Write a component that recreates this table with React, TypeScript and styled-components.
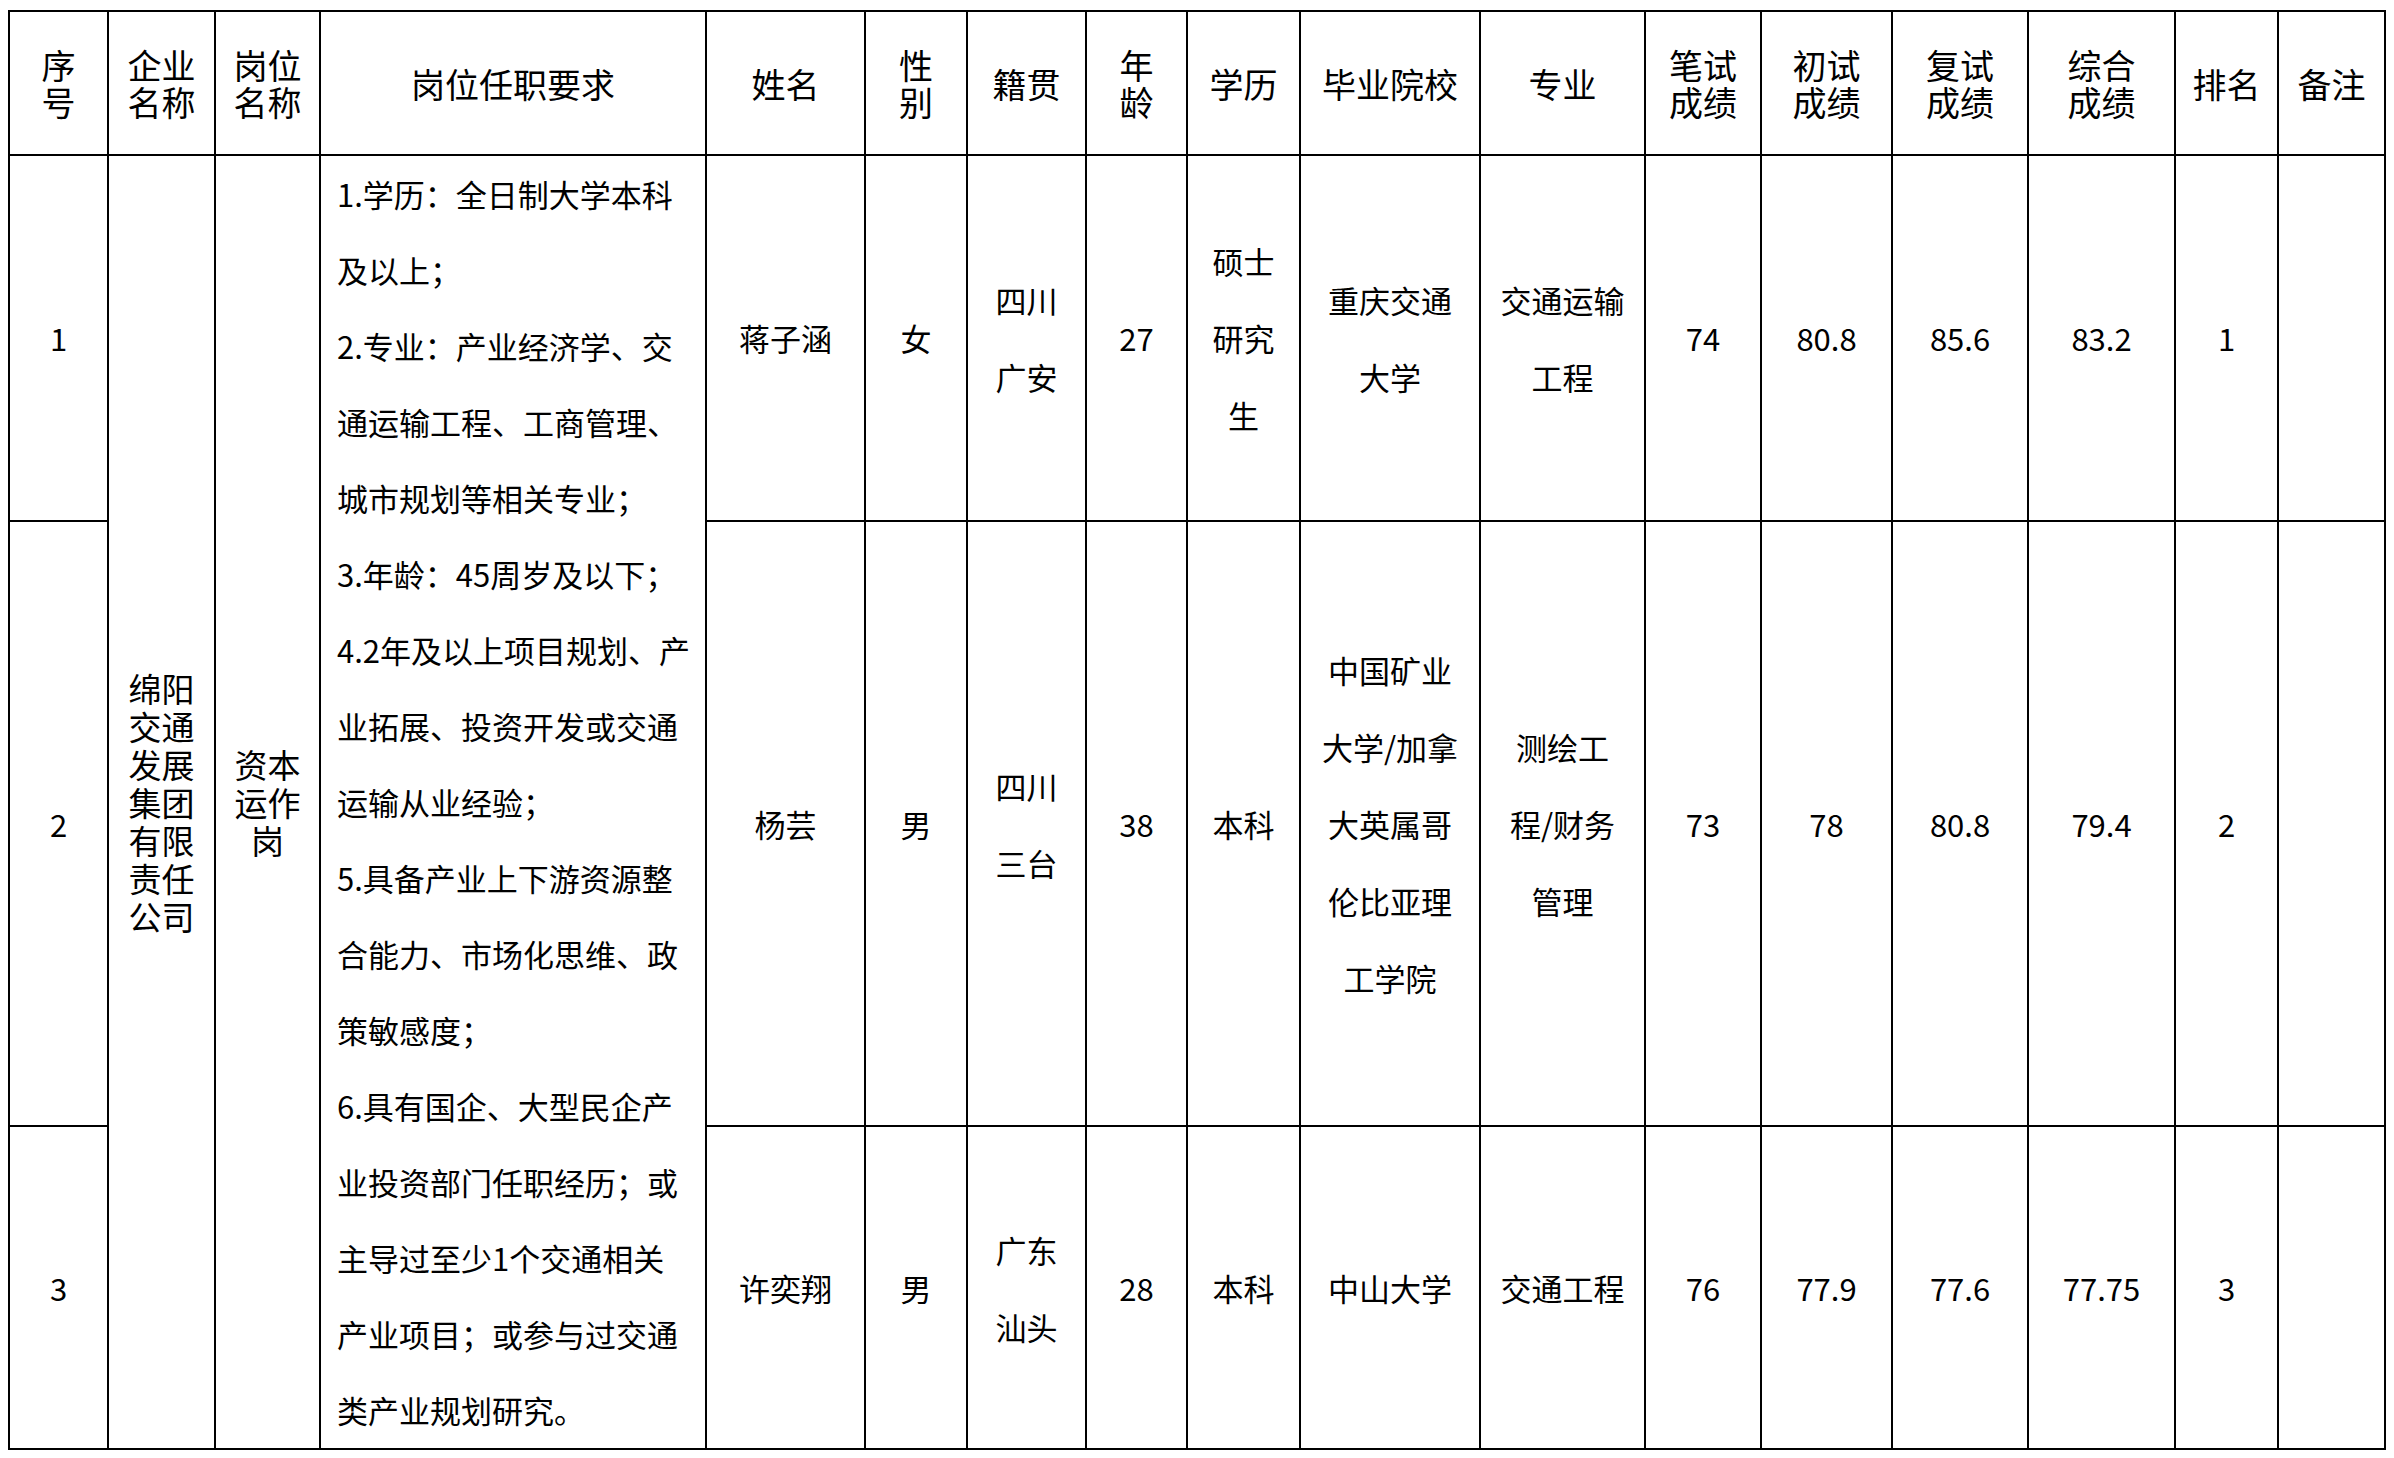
import React from "react";
import styled, { createGlobalStyle } from "styled-components";

const GlobalStyle = createGlobalStyle`
  html, body { margin: 0; padding: 0; background: #ffffff; }
  body {
    padding: 10px 0 0 8px;
    font-family: "Noto Sans CJK SC", "Noto Sans", sans-serif;
    color: #000;
  }
`;

const Sheet = styled.table`
  border-collapse: collapse;
  table-layout: fixed;
  width: 2378px;
  border: 2px solid #000;
`;

const Col = styled.col<{ $w: number }>`
  width: ${(p) => p.$w}px;
`;

const Row = styled.tr<{ $h: number }>`
  height: ${(p) => p.$h}px;
`;

const HeadCell = styled.th`
  border: 2px solid #000;
  padding: 0;
  font-weight: 400;
  font-size: 34px;
  line-height: 37px;
  text-align: center;
  vertical-align: middle;
  white-space: nowrap;
`;

const Cell = styled.td<{ $lh?: number; $fs?: number }>`
  border: 2px solid #000;
  padding: 0;
  font-size: ${(p) => p.$fs ?? 31}px;
  line-height: ${(p) => p.$lh ?? 77}px;
  text-align: center;
  vertical-align: middle;
  white-space: nowrap;
`;

const UnitCell = styled(Cell)`
  font-size: 33px;
  line-height: 38px;
`;

const ReqCell = styled(Cell)`
  text-align: left;
  line-height: 76px;
  padding-left: 16px;
  vertical-align: top;
`;

const Lines: React.FC<{ text: string }> = ({ text }) => {
  const parts = text.split("|");
  return (
    <>
      {parts.map((p, i) => (
        <React.Fragment key={i}>
          {i > 0 && <br />}
          {p}
        </React.Fragment>
      ))}
    </>
  );
};

const widths = [99, 107, 105, 386, 159, 102, 119, 101, 113, 180, 165, 116, 131, 136, 147, 103, 107];

const headers = [
  "序|号",
  "企业|名称",
  "岗位|名称",
  "岗位任职要求",
  "姓名",
  "性|别",
  "籍贯",
  "年|龄",
  "学历",
  "毕业院校",
  "专业",
  "笔试|成绩",
  "初试|成绩",
  "复试|成绩",
  "综合|成绩",
  "排名",
  "备注",
];

const requirements = [
  "1.学历：全日制大学本科",
  "及以上；",
  "2.专业：产业经济学、交",
  "通运输工程、工商管理、",
  "城市规划等相关专业；",
  "3.年龄：45周岁及以下；",
  "4.2年及以上项目规划、产",
  "业拓展、投资开发或交通",
  "运输从业经验；",
  "5.具备产业上下游资源整",
  "合能力、市场化思维、政",
  "策敏感度；",
  "6.具有国企、大型民企产",
  "业投资部门任职经历；或",
  "主导过至少1个交通相关",
  "产业项目；或参与过交通",
  "类产业规划研究。",
];

type Person = {
  no: string;
  name: string;
  sex: string;
  origin: string;
  age: string;
  edu: string;
  school: string;
  major: string;
  written: string;
  first: string;
  second: string;
  total: string;
  rank: string;
  h: number;
};

const people: Person[] = [
  {
    no: "1",
    name: "蒋子涵",
    sex: "女",
    origin: "四川|广安",
    age: "27",
    edu: "硕士|研究|生",
    school: "重庆交通|大学",
    major: "交通运输|工程",
    written: "74",
    first: "80.8",
    second: "85.6",
    total: "83.2",
    rank: "1",
    h: 365,
  },
  {
    no: "2",
    name: "杨芸",
    sex: "男",
    origin: "四川|三台",
    age: "38",
    edu: "本科",
    school: "中国矿业|大学/加拿|大英属哥|伦比亚理|工学院",
    major: "测绘工|程/财务|管理",
    written: "73",
    first: "78",
    second: "80.8",
    total: "79.4",
    rank: "2",
    h: 605,
  },
  {
    no: "3",
    name: "许奕翔",
    sex: "男",
    origin: "广东|汕头",
    age: "28",
    edu: "本科",
    school: "中山大学",
    major: "交通工程",
    written: "76",
    first: "77.9",
    second: "77.6",
    total: "77.75",
    rank: "3",
    h: 322,
  },
];

export default function App() {
  return (
    <>
      <GlobalStyle />
      <Sheet>
        <colgroup>
          {widths.map((w, i) => (
            <Col key={i} $w={w} />
          ))}
        </colgroup>
        <thead>
          <Row $h={144}>
            {headers.map((h, i) => (
              <HeadCell key={i}>
                <Lines text={h} />
              </HeadCell>
            ))}
          </Row>
        </thead>
        <tbody>
          {people.map((p, i) => (
            <Row key={p.no} $h={p.h}>
              <Cell>{p.no}</Cell>
              {i === 0 && (
                <>
                  <UnitCell rowSpan={3}>
                    <Lines text="绵阳|交通|发展|集团|有限|责任|公司" />
                  </UnitCell>
                  <UnitCell rowSpan={3}>
                    <Lines text="资本|运作|岗" />
                  </UnitCell>
                  <ReqCell rowSpan={3}>
                    <Lines text={requirements.join("|")} />
                  </ReqCell>
                </>
              )}
              <Cell>{p.name}</Cell>
              <Cell>{p.sex}</Cell>
              <Cell>
                <Lines text={p.origin} />
              </Cell>
              <Cell>{p.age}</Cell>
              <Cell>
                <Lines text={p.edu} />
              </Cell>
              <Cell>
                <Lines text={p.school} />
              </Cell>
              <Cell>
                <Lines text={p.major} />
              </Cell>
              <Cell>{p.written}</Cell>
              <Cell>{p.first}</Cell>
              <Cell>{p.second}</Cell>
              <Cell>{p.total}</Cell>
              <Cell>{p.rank}</Cell>
              <Cell></Cell>
            </Row>
          ))}
        </tbody>
      </Sheet>
    </>
  );
}
